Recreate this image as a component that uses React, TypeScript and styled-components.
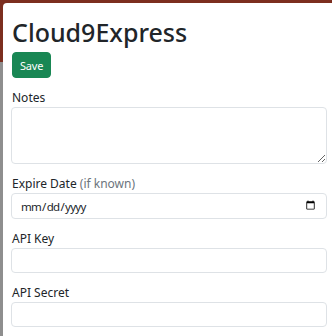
import React from "react";
import styled, { createGlobalStyle } from "styled-components";

const GlobalStyle = createGlobalStyle`
  html, body {
    margin: 0;
    padding: 0;
  }
  body {
    font-family: "Noto Sans", "Open Sans", sans-serif;
    color: #212529;
    background: linear-gradient(to bottom, #7c2e1f 0, #7c2e1f 62px, #8e8e8e 62px, #8e8e8e 100%);
    min-height: 336px;
    overflow: hidden;
  }
`;

const Page = styled.div`
  padding: 3px 0 0 3px;
  min-height: 333px;
  display: flex;
`;

const Panel = styled.div`
  flex: 1;
  background: #ffffff;
  border-top-left-radius: 4px;
  padding: 14px 5px 12px 8px;
  min-height: 307px;
`;

const Title = styled.h2`
  margin: 0 0 5px 1px;
  font-size: 25px;
  line-height: 30px;
  font-weight: 500;
  color: #212529;
`;

const SaveButton = styled.button`
  display: inline-flex;
  align-items: center;
  justify-content: center;
  height: 26px;
  padding: 0 7px;
  margin: 0 0 11px 1px;
  border: 1px solid #198754;
  border-radius: 4px;
  background: #198754;
  color: #ffffff;
  font-family: "Noto Sans", "Open Sans", sans-serif;
  font-size: 11px;
  letter-spacing: -0.2px;
  cursor: pointer;
`;

const Field = styled.div`
  display: flex;
  flex-direction: column;
  margin-bottom: 11px;
`;

const Label = styled.label`
  display: block;
  font-size: 12px;
  line-height: 18px;
  padding-left: 1px;
  color: #212529;
`;

const Muted = styled.span`
  color: #6c757d;
`;

const inputBase = `
  box-sizing: border-box;
  width: 100%;
  border: 1px solid #dee2e6;
  border-radius: 4px;
  background: #ffffff;
  font-family: "Noto Sans", "Open Sans", sans-serif;
  font-size: 12px;
  color: #212529;
  padding: 0 8px;
  outline: none;
`;

const TextInput = styled.input`
  ${inputBase}
  height: 25px;
`;

const DateInput = styled.input`
  ${inputBase}
  height: 26px;
  font-size: 11.5px;
  letter-spacing: -0.7px;
`;

const TextArea = styled.textarea`
  ${inputBase}
  display: block;
  height: 57px;
  padding: 4px 8px;
  resize: vertical;
`;

export default function App() {
  return (
    <>
      <GlobalStyle />
      <Page>
        <Panel>
          <Title>Cloud9Express</Title>
          <SaveButton type="button">Save</SaveButton>
          <Field>
            <Label htmlFor="notes">Notes</Label>
            <TextArea id="notes" />
          </Field>
          <Field>
            <Label htmlFor="expire">
              Expire Date <Muted>(if known)</Muted>
            </Label>
            <DateInput id="expire" type="date" />
          </Field>
          <Field>
            <Label htmlFor="apikey">API Key</Label>
            <TextInput id="apikey" type="text" />
          </Field>
          <Field>
            <Label htmlFor="apisecret">API Secret</Label>
            <TextInput id="apisecret" type="text" />
          </Field>
        </Panel>
      </Page>
    </>
  );
}
